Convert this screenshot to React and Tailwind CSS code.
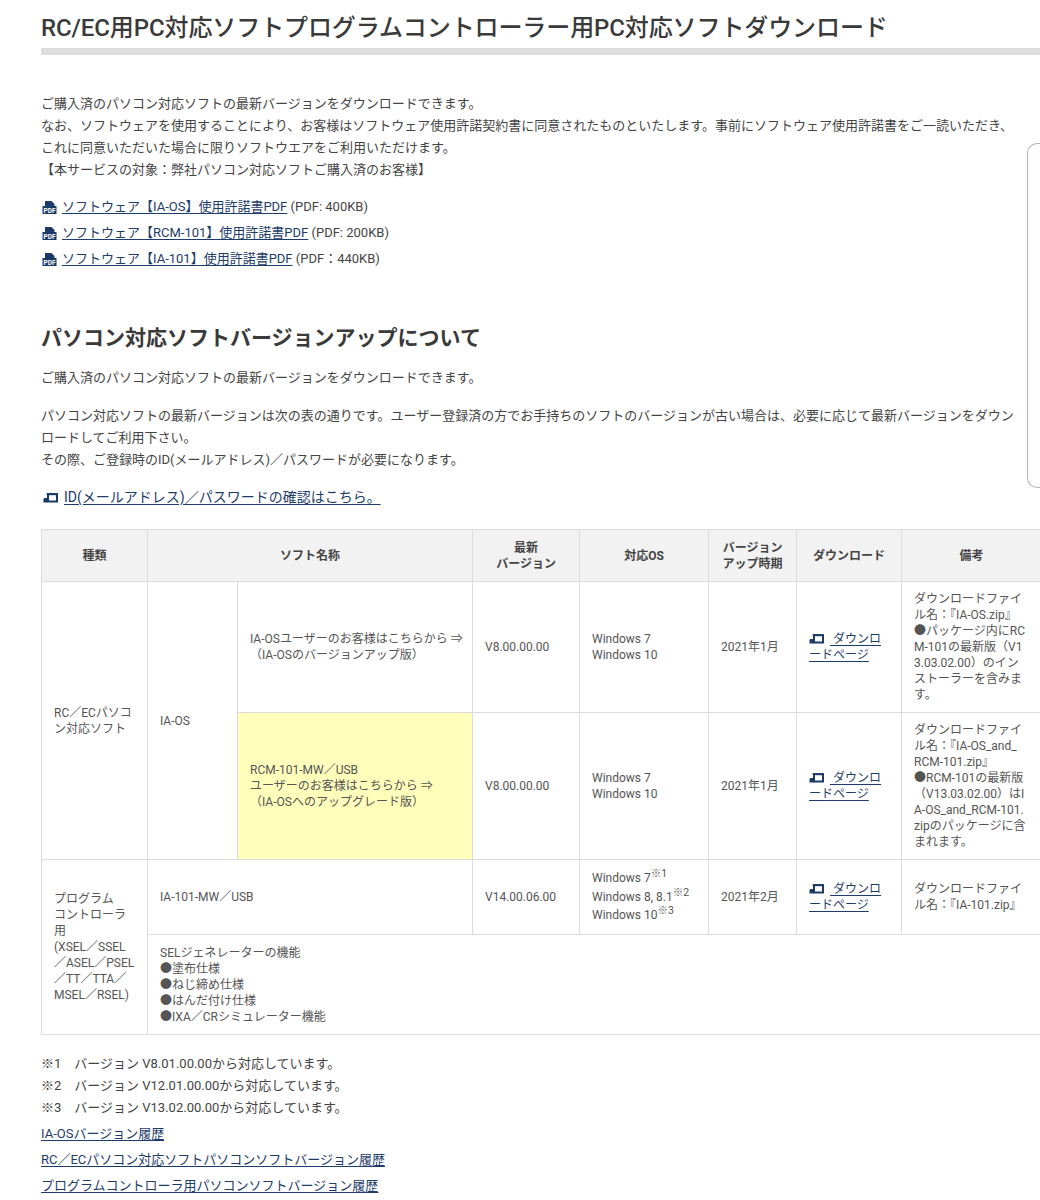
const ff = { fontFamily: '"Roboto","Noto Sans CJK JP",sans-serif' };

function PdfIcon() {
  return (
    <svg width="15" height="13" viewBox="0 0 15 13" className="inline-block align-[-3px] mr-[5px] shrink-0">
      <path d="M3 0H9.5L12.5 3V5H3Z" fill="#1c3a68" />
      <rect x="0.5" y="5" width="14" height="8" fill="#1c3a68" />
      <text x="7.5" y="11.6" textAnchor="middle" fontSize="6.5" fontWeight="700" fill="#fff" fontFamily="Roboto, sans-serif">PDF</text>
    </svg>
  );
}

function WinIcon() {
  return (
    <svg width="15" height="10" viewBox="0 0 15 10" className="inline-block align-[-1px] mr-[6px] shrink-0">
      <path d="M0.5 9.5V6.5C0.5 5.5 1.2 5 2 5H4.5V9.5Z" fill="#1c3a68" />
      <rect x="5" y="1.2" width="9" height="7.3" fill="none" stroke="#1c3a68" strokeWidth="2" />
      <rect x="3.6" y="0.2" width="11" height="1.6" fill="#1c3a68" />
    </svg>
  );
}

function A({ children, className = "" }) {
  return <a href="#" className={"text-[#1d3c6a] underline underline-offset-2 " + className}>{children}</a>;
}

const th = "bg-[#f2f2f2] border border-[#dcdcdc] text-center font-bold text-[#444] text-[12px] leading-4 align-middle p-0";
const td = "border border-[#dcdcdc] text-[#555] text-[12px] leading-4 align-middle px-3 py-0 whitespace-nowrap";

function Dl() {
  return (
    <A>
      <WinIcon />
      <span>&nbsp;ダウンロ</span>
      <br />
      ードページ
    </A>
  );
}

export default function App() {
  return (
    <div className="relative w-[1040px] h-[1200px] overflow-hidden bg-white text-[13px] leading-[22px] text-[#444]" style={ff}>
      <div className="absolute right-0 top-[143px] w-[13px] h-[345px] rounded-l-[10px] border border-r-0 border-[#b5b5b5] bg-[#fdfdfd]" />
      <div className="pl-[41px]">
        <h1 className="h-[55px] border-b-[7px] border-[#dddddd] text-[24px] leading-[56px] font-medium text-[#3a3a3a] whitespace-nowrap -tracking-[0.1px]">
          RC/EC用PC対応ソフトプログラムコントローラー用PC対応ソフトダウンロード
        </h1>
        <p className="mt-[38px] whitespace-nowrap">
          ご購入済のパソコン対応ソフトの最新バージョンをダウンロードできます。<br />
          なお、ソフトウェアを使用することにより、お客様はソフトウェア使用許諾契約書に同意されたものといたします。事前にソフトウェア使用許諾書をご一読いただき、<br />
          これに同意いただいた場合に限りソフトウエアをご利用いただけます。<br />
          【本サービスの対象：弊社パソコン対応ソフトご購入済のお客様】
        </p>
        <ul className="mt-[13px] leading-[26px] whitespace-nowrap">
          <li className="pl-[1px]"><PdfIcon /><A>ソフトウェア【IA-OS】使用許諾書PDF</A> (PDF: 400KB)</li>
          <li className="pl-[1px]"><PdfIcon /><A>ソフトウェア【RCM-101】使用許諾書PDF</A> (PDF: 200KB)</li>
          <li className="pl-[1px]"><PdfIcon /><A>ソフトウェア【IA-101】使用許諾書PDF</A> (PDF：440KB)</li>
        </ul>
        <h2 className="mt-[51px] text-[21px] leading-[30px] font-bold text-[#3a3a3a]">パソコン対応ソフトバージョンアップについて</h2>
        <p className="mt-[14px]">ご購入済のパソコン対応ソフトの最新バージョンをダウンロードできます。</p>
        <p className="mt-[16px] whitespace-nowrap">
          パソコン対応ソフトの最新バージョンは次の表の通りです。ユーザー登録済の方でお手持ちのソフトのバージョンが古い場合は、必要に応じて最新バージョンをダウン<br />
          ロードしてご利用下さい。<br />
          その際、ご登録時のID(メールアドレス)／パスワードが必要になります。
        </p>
        <p className="mt-[13px] leading-[26px] pl-[2px] text-[14px] whitespace-nowrap">
          <WinIcon /><A>ID(メールアドレス)／パスワードの確認はこちら。</A>
        </p>

        <table className="mt-[19px] w-[1004px] table-fixed border-collapse">
          <colgroup>
            <col className="w-[106px]" />
            <col className="w-[90px]" />
            <col className="w-[235px]" />
            <col className="w-[107px]" />
            <col className="w-[129px]" />
            <col className="w-[88px]" />
            <col className="w-[105px]" />
            <col className="w-[144px]" />
          </colgroup>
          <thead>
            <tr className="h-[52px]">
              <th className={th}>種類</th>
              <th className={th} colSpan={2}>ソフト名称</th>
              <th className={th}>最新<br />バージョン</th>
              <th className={th}>対応OS</th>
              <th className={th}>バージョン<br />アップ時期</th>
              <th className={th}>ダウンロード</th>
              <th className={th + " pr-[4px]"}>備考</th>
            </tr>
          </thead>
          <tbody>
            <tr className="h-[131px]">
              <td className={td} rowSpan={2}>RC／ECパソコ<br />ン対応ソフト</td>
              <td className={td} rowSpan={2}>IA-OS</td>
              <td className={td}>IA-OSユーザーのお客様はこちらから ⇒<br />（IA-OSのバージョンアップ版）</td>
              <td className={td}>V8.00.00.00</td>
              <td className={td}>Windows 7<br />Windows 10</td>
              <td className={td}>2021年1月</td>
              <td className={td}><Dl /></td>
              <td className={td}>ダウンロードファイ<br />ル名：『IA-OS.zip』<br />●パッケージ内にRC<br />M-101の最新版（V1<br />3.03.02.00）のイン<br />ストーラーを含みま<br />す。</td>
            </tr>
            <tr className="h-[147px]">
              <td className={td + " bg-[#ffffbb]"}>RCM-101-MW／USB<br />ユーザーのお客様はこちらから ⇒<br />（IA-OSへのアップグレード版）</td>
              <td className={td}>V8.00.00.00</td>
              <td className={td}>Windows 7<br />Windows 10</td>
              <td className={td}>2021年1月</td>
              <td className={td}><Dl /></td>
              <td className={td}>ダウンロードファイ<br />ル名：『IA-OS_and_<br />RCM-101.zip』<br />●RCM-101の最新版<br />（V13.03.02.00）はI<br />A-OS_and_RCM-101.<br />zipのパッケージに含<br />まれます。</td>
            </tr>
            <tr className="h-[75px]">
              <td className={td} rowSpan={2}>プログラム<br />コントローラ<br />用<br />(XSEL／SSEL<br />／ASEL／PSEL<br />／TT／TTA／<br />MSEL／RSEL)</td>
              <td className={td} colSpan={2}>IA-101-MW／USB</td>
              <td className={td}>V14.00.06.00</td>
              <td className={td + " leading-[18.5px]"}>
                Windows 7<sup className="text-[10.5px]">※1</sup><br />
                Windows 8, 8.1<sup className="text-[10.5px]">※2</sup><br />
                Windows 10<sup className="text-[10.5px]">※3</sup>
              </td>
              <td className={td}>2021年2月</td>
              <td className={td}><Dl /></td>
              <td className={td}>ダウンロードファイ<br />ル名：『IA-101.zip』</td>
            </tr>
            <tr className="h-[100px]">
              <td className={td} colSpan={7}>SELジェネレーターの機能<br />●塗布仕様<br />●ねじ締め仕様<br />●はんだ付け仕様<br />●IXA／CRシミュレーター機能</td>
            </tr>
          </tbody>
        </table>

        <p className="mt-[18px] whitespace-nowrap">
          ※1　バージョン V8.01.00.00から対応しています。<br />
          ※2　バージョン V12.01.00.00から対応しています。<br />
          ※3　バージョン V13.02.00.00から対応しています。
        </p>
        <ul className="mt-[2px] leading-[26px]">
          <li><A>IA-OSバージョン履歴</A></li>
          <li><A>RC／ECパソコン対応ソフトパソコンソフトバージョン履歴</A></li>
          <li><A>プログラムコントローラ用パソコンソフトバージョン履歴</A></li>
        </ul>
      </div>
    </div>
  );
}
